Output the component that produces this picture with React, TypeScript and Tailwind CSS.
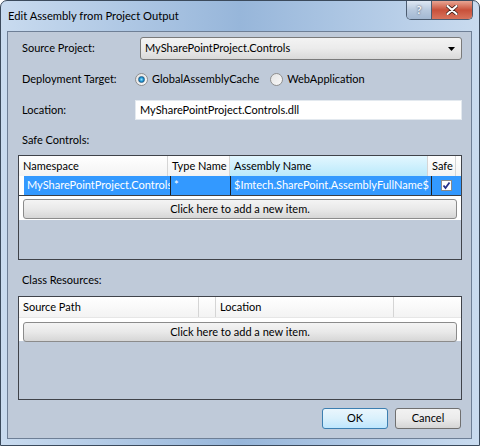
import React from "react";

const Radio = ({ checked }: { checked: boolean }) => (
  <span className="w-[13px] h-[13px] rounded-full border border-[#8f8f8f] bg-linear-to-br from-[#e4e4e4] to-[#f8f8f8] flex items-center justify-center">
    {checked && (
      <span className="w-[7px] h-[7px] rounded-full bg-radial from-[#8fe0ff] via-[#1b9ad6] to-[#0d5c9a] border border-[#2c628b]"></span>
    )}
  </span>
);

const AddButton = () => (
  <div className="h-[20px] mx-[4px] rounded-[3px] border border-[#8b8b8b] bg-linear-to-b from-[#f4f4f4] via-[#e9e9e9] to-[#d6d6d6] flex items-center justify-center text-black">
    Click here to add a new item.
  </div>
);

const HeadCell = ({ w, children, active }: { w: string; children?: React.ReactNode; active?: boolean }) => (
  <div
    className={`${w} h-full border-r border-[#d5d5d5] flex items-center px-[4px] whitespace-nowrap overflow-hidden ${
      active ? "bg-linear-to-b from-[#e3f7ff] to-[#b9e9fb]" : "bg-linear-to-b from-white to-[#f3f3f3]"
    }`}
  >
    {children}
  </div>
);

export default function App() {
  return (
    <div className="w-[480px] h-[446px] font-[Lato,sans-serif] text-[11px] text-black select-none">
      <div className="w-full h-full rounded-t-[7px] border border-[#3b4a5c] bg-linear-to-r from-[#c9dbef] via-[#97b6da] to-[#c9dbef] flex flex-col">
        {/* title bar */}
        <div className="h-[30px] flex items-start pl-[7px]">
          <div className="pt-[7px] text-[11.2px] text-black">Edit Assembly from Project Output</div>
          <div className="ml-auto mr-[6px] flex h-[19px] border border-t-0 border-[#4c5c70] rounded-b-[5px] overflow-hidden">
            <div className="w-[25px] h-full bg-linear-to-b from-[#dfe8f3] via-[#b8c9de] to-[#a3b8d2] border-r border-[#4c5c70] flex items-center justify-center text-[11px] font-bold text-[#f4f7fb] [text-shadow:0_0_2px_#334]">
              ?
            </div>
            <div className="w-[40px] h-full bg-linear-to-b from-[#e8a593] via-[#c8503a] to-[#d8735c] flex items-center justify-center">
              <svg width="12" height="10" viewBox="0 0 12 10">
                <path d="M1.5 1 L10.5 9 M10.5 1 L1.5 9" stroke="#3a1a14" strokeWidth="3.6" strokeLinecap="round" />
                <path d="M1.5 1 L10.5 9 M10.5 1 L1.5 9" stroke="#ffffff" strokeWidth="2.2" strokeLinecap="round" />
              </svg>
            </div>
          </div>
        </div>

        {/* client area */}
        <div className="ml-[6px] mr-[7px] h-[408px] border border-[#6e7f96] bg-[#bfcad9] flex flex-col pl-[10px] pr-[9px] pt-[5px] whitespace-nowrap">
          <div className="flex items-center h-[23px]">
            <div className="w-[122px] pl-[4px]">Source Project:</div>
            <div className="flex-1 h-full rounded-[3px] border border-[#7a7a7a] bg-linear-to-b from-[#f3f3f3] via-[#ebebeb] to-[#d9d9d9] flex items-center pl-[4px] pr-[6px]">
              <span>MySharePointProject.Controls</span>
              <svg className="ml-auto" width="7" height="4" viewBox="0 0 7 4">
                <path d="M0 0 H7 L3.5 4 Z" fill="#000" />
              </svg>
            </div>
          </div>

          <div className="flex items-center h-[20px] mt-[9px]">
            <div className="w-[117px] pl-[4px]">Deployment Target:</div>
            <div className="flex items-center gap-[4px]">
              <Radio checked />
              <span>GlobalAssemblyCache</span>
            </div>
            <div className="flex items-center gap-[4px] ml-[11px]">
              <Radio checked={false} />
              <span>WebApplication</span>
            </div>
          </div>

          <div className="flex items-center h-[20px] mt-[11px]">
            <div className="w-[117px] pl-[4px]">Location:</div>
            <div className="flex-1 h-full bg-white border border-[#e3e9ef] flex items-center pl-[4px]">
              MySharePointProject.Controls.dll
            </div>
          </div>

          <div className="h-[16px] mt-[12px] pl-[4px] flex items-center">Safe Controls:</div>

          <div className="mt-[7px] h-[105px] border border-[#40434a] flex flex-col">
            <div className="h-[20px] flex">
              <HeadCell w="w-[149px]">Namespace</HeadCell>
              <HeadCell w="w-[62px]">Type Name</HeadCell>
              <HeadCell w="w-[198px]" active>
                Assembly Name
              </HeadCell>
              <HeadCell w="w-[28px]">Safe</HeadCell>
              <div className="flex-1 bg-linear-to-b from-white to-[#f3f3f3]"></div>
            </div>
            <div className="h-[20px] flex bg-white border-b border-[#3c3f45]">
              <div className="w-[5px]"></div>
              <div className="w-[147px] bg-[#3399ff] text-white border-r border-[#222] flex items-center px-[3px] overflow-hidden">
                MySharePointProject.Controls
              </div>
              <div className="w-[60px] bg-[#3399ff] text-white border-r border-[#222] flex items-center px-[3px]">*</div>
              <div className="w-[201px] bg-[#3399ff] text-white border-r border-[#222] flex items-center px-[3px] overflow-hidden">
                $Imtech.SharePoint.AssemblyFullName$
              </div>
              <div className="flex-1 bg-[#3399ff] flex items-center justify-center">
                <span className="w-[11px] h-[11px] bg-white border border-[#8a8a8a] flex items-center justify-center">
                  <svg width="9" height="9" viewBox="0 0 9 9">
                    <path d="M1.5 4.5 L3.5 7 L7.5 1.5" stroke="#26308a" strokeWidth="1.8" fill="none" />
                  </svg>
                </span>
              </div>
            </div>
            <div className="h-[24px] bg-white pt-[3px]">
              <AddButton />
            </div>
          </div>

          <div className="h-[16px] mt-[12px] pl-[4px] flex items-center">Class Resources:</div>

          <div className="mt-[8px] h-[104px] border border-[#40434a] flex flex-col">
            <div className="h-[20px] flex">
              <HeadCell w="w-[180px]">Source Path</HeadCell>
              <HeadCell w="w-[17px]"></HeadCell>
              <HeadCell w="w-[178px]">Location</HeadCell>
              <div className="flex-1 bg-linear-to-b from-white to-[#f3f3f3]"></div>
            </div>
            <div className="h-[24px] bg-white pt-[4px] border-t border-[#e6e6e6]">
              <AddButton />
            </div>
          </div>

          <div className="mt-[8px] flex justify-end gap-[7px] pr-[1px]">
            <div className="w-[66px] h-[21px] rounded-[3px] border border-[#3c7fb1] bg-linear-to-b from-[#eaf6fd] via-[#d9f0fc] to-[#bee6fd] flex items-center justify-center">
              OK
            </div>
            <div className="w-[66px] h-[21px] rounded-[3px] border border-[#707070] bg-linear-to-b from-[#f2f2f2] via-[#ebebeb] to-[#d5d5d5] flex items-center justify-center">
              Cancel
            </div>
          </div>
        </div>
      </div>
    </div>
  );
}
